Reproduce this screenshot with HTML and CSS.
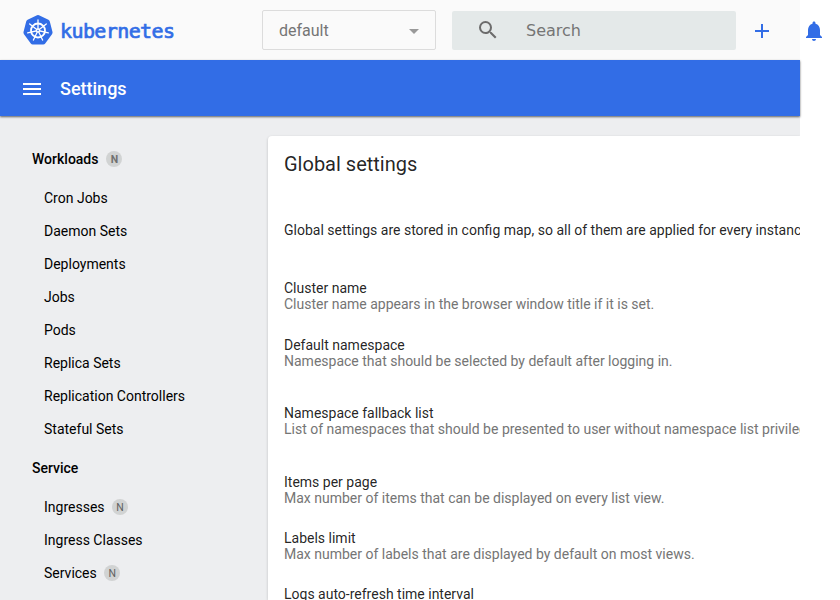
FILE: index.html
```html
<!DOCTYPE html>
<html lang="en">
<head>
<meta charset="utf-8">
<title>Settings</title>
<link rel="stylesheet" href="styles.css">
</head>
<body>
<div class="app">
  <header class="topbar">
    <a class="brand">
      <svg class="logo" viewBox="0 0 30 30">
        <path d="M14 .3Q15 -.1 16 .3L25.4 4.8Q26.5 5.4 26.8 6.5L29.5 17Q29.7 18.2 29 19.2L22.2 28.5Q21.5 29.6 20.2 29.6H9.8Q8.5 29.6 7.8 28.5L1 19.2Q.3 18.2 .5 17L3.2 6.5Q3.5 5.4 4.6 4.8Z" fill="#326de6"/>
        <g stroke="#fff" fill="none" stroke-linecap="round">
          <circle cx="15" cy="15.5" r="7" stroke-width="1.8"/>
          <g id="spokes" stroke-width="1.3">
            <path id="spoke" d="M15 15.5V4.9"/>
            <use href="#spoke" transform="rotate(51.43 15 15.5)"/>
            <use href="#spoke" transform="rotate(102.86 15 15.5)"/>
            <use href="#spoke" transform="rotate(154.29 15 15.5)"/>
            <use href="#spoke" transform="rotate(205.71 15 15.5)"/>
            <use href="#spoke" transform="rotate(257.14 15 15.5)"/>
            <use href="#spoke" transform="rotate(308.57 15 15.5)"/>
          </g>
        </g>
        <circle cx="15" cy="15.5" r="2.2" fill="#fff"/>
        <circle cx="15" cy="15.5" r=".8" fill="#326de6"/>
      </svg>
      <span class="wordmark">kubernetes</span>
    </a>
    <div class="namespace"><span>default</span><i class="caret"></i></div>
    <div class="search">
      <svg viewBox="0 0 24 24"><path fill="#6c6c6c" d="M15.5 14h-.79l-.28-.27A6.47 6.47 0 0 0 16 9.5 6.5 6.5 0 1 0 9.5 16c1.61 0 3.09-.59 4.23-1.57l.27.28v.79l5 4.99L20.49 19l-4.99-5zm-6 0C7.01 14 5 11.99 5 9.5S7.01 5 9.5 5 14 7.01 14 9.5 11.99 14 9.5 14z"/></svg>
      <span>Search</span>
    </div>
    <svg class="action" viewBox="0 0 24 24"><path d="M19 13h-6v6h-2v-6H5v-2h6V5h2v6h6v2z"/></svg>
    <svg class="action bell" viewBox="0 0 24 24"><path d="M12 22c1.1 0 2-.9 2-2h-4c0 1.1.89 2 2 2zm6-6v-5c0-3.07-1.64-5.64-4.5-6.32V4c0-.83-.67-1.5-1.5-1.5s-1.5.67-1.5 1.5v.68C7.63 5.36 6 7.92 6 11v5l-2 2v1h16v-1l-2-2z"/></svg>
  </header>
  <div class="titlebar">
    <svg viewBox="0 0 24 24"><path fill="#fff" d="M3 18h18v-2H3v2zm0-5h18v-2H3v2zm0-7v2h18V6H3z"/></svg>
    <span>Settings</span>
  </div>
  <div class="body">
    <nav class="nav">
      <div class="group">Workloads<b class="badge">N</b></div>
      <div class="item">Cron Jobs</div>
      <div class="item">Daemon Sets</div>
      <div class="item">Deployments</div>
      <div class="item">Jobs</div>
      <div class="item">Pods</div>
      <div class="item">Replica Sets</div>
      <div class="item">Replication Controllers</div>
      <div class="item">Stateful Sets</div>
      <div class="group">Service</div>
      <div class="item">Ingresses<b class="badge">N</b></div>
      <div class="item">Ingress Classes</div>
      <div class="item">Services<b class="badge">N</b></div>
    </nav>
    <main class="card">
      <h1>Global settings</h1>
      <p class="intro">Global settings are stored in config map, so all of them are applied for every instance</p>
      <div class="setting gap-s"><div>Cluster name</div><div class="hint">Cluster name appears in the browser window title if it is set.</div></div>
      <div class="setting gap-l"><div>Default namespace</div><div class="hint">Namespace that should be selected by default after logging in.</div></div>
      <div class="setting gap-xl"><div>Namespace fallback list</div><div class="hint">List of namespaces that should be presented to user without namespace list privileges.</div></div>
      <div class="setting"><div>Items per page</div><div class="hint">Max number of items that can be displayed on every list view.</div></div>
      <div class="setting"><div>Labels limit</div><div class="hint">Max number of labels that are displayed by default on most views.</div></div>
      <div class="setting"><div>Logs auto-refresh time interval</div></div>
    </main>
  </div>
</div>
</body>
</html>
```
FILE: styles.css
```css
* { box-sizing: border-box; }
body {
  margin: 0;
  height: 600px;
  overflow: hidden;
  background: #fff;
  font-family: Roboto, sans-serif;
  font-size: 14px;
  color: rgba(0, 0, 0, .87);
}
.app { width: 800px; height: 600px; display: flex; flex-direction: column; }
.topbar {
  flex: none;
  height: 60px;
  display: flex;
  align-items: center;
  background: #fafafa;
  padding-left: 23px;
}
.brand { width: 239px; flex: none; display: flex; align-items: center; }
.logo { width: 30px; height: 30px; margin-right: 7px; }
.wordmark {
  margin-top: 1px;
  font: 20px/30px "DejaVu Sans Mono", monospace;
  letter-spacing: -.6px;
  -webkit-text-stroke: .7px #326de6;
  color: #326de6;
}
.namespace {
  width: 174px;
  height: 40px;
  flex: none;
  border: 1px solid #dcdcdc;
  border-radius: 2px;
  display: flex;
  align-items: center;
  justify-content: space-between;
  padding: 0 16px;
  font-size: 16px;
  color: #757575;
}
.caret {
  margin-top: 2px;
  border: 5px solid transparent;
  border-top-color: #999;
  border-bottom: 0;
}
.search {
  width: 284px;
  height: 39px;
  flex: none;
  margin: 1px 0 0 16px;
  border-radius: 2px;
  background: #e4e9e9;
  display: flex;
  align-items: center;
  padding-left: 24px;
  font: 16px "DejaVu Sans", sans-serif;
  color: #757575;
}
.search svg { width: 24px; height: 24px; margin: -2px 26px 0 0; }
.action { width: 24px; height: 24px; flex: none; margin: 2px 0 0 14px; fill: #326de6; }
.bell { margin-left: 28px; }
.titlebar {
  flex: none;
  position: relative;
  height: 56px;
  display: flex;
  align-items: center;
  padding: 0 20px;
  background: #326de6;
  color: #fff;
  font-size: 18px;
  font-weight: 500;
  box-shadow: 0 1px 2px rgba(0, 0, 0, .6);
}
.titlebar svg { width: 24px; height: 24px; margin: 2px 16px 0 0; }
.body {
  flex: 1;
  min-height: 0;
  display: flex;
  overflow: hidden;
  background: #edeef0;
}
.nav { width: 268px; flex: none; padding: 23px 0 0 32px; color: #000; }
.group {
  height: 39px;
  line-height: 40px;
  display: flex;
  align-items: center;
  font-weight: 500;
}
.item + .group { margin-top: 3px; }
.group + .item { margin-top: 3px; }
.item { height: 33px; display: flex; align-items: center; padding-left: 12px; }
.badge {
  width: 16px;
  height: 16px;
  margin-left: 8px;
  border-radius: 50%;
  background: #d1d3d3;
  color: #707070;
  font-size: 10.5px;
  line-height: 17px;
  text-align: center;
  font-weight: 700;
}
.item .badge { margin-left: 7.5px; font-weight: 400; color: #606060; }
.card {
  flex: 1;
  min-width: 0;
  margin-top: 20px;
  padding: 16px 0 0 16px;
  background: #fff;
  border-radius: 4px 0 0 0;
  box-shadow: 0 1px 3px rgba(0, 0, 0, .2);
  white-space: nowrap;
}
h1 { margin: 0; font-size: 20px; line-height: 24px; font-weight: 400; }
.intro { margin: 46px 0 42px; line-height: 16px; }
.setting { line-height: 16px; margin-bottom: 24px; }
.gap-s { margin-bottom: 25px; }
.gap-l { margin-bottom: 36px; }
.gap-xl { margin-bottom: 37px; }
.hint { color: #757575; }
```
